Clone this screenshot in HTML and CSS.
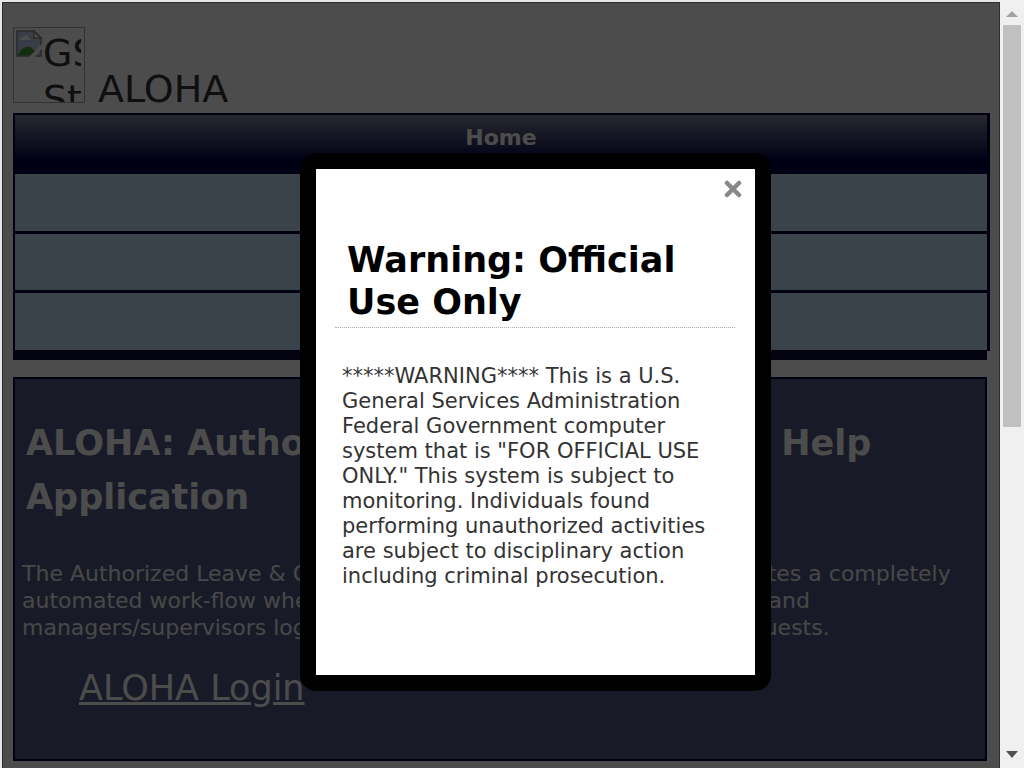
FILE: index.html
```
<!DOCTYPE html>
<html lang="en">
<head>
<meta charset="utf-8">
<title>ALOHA</title>
<link rel="stylesheet" href="styles.css">
</head>
<body>
<div class="window">
  <div class="viewport">
    <div class="page">
      <header class="header">
        <div class="logo" role="img" aria-label="GSA Star Mark">
          <svg class="logo-icon" viewBox="0 0 27 27" width="27" height="27" aria-hidden="true">
            <path d="M1 1h17l7 7v18H1z" fill="#bccdf0"/>
            <path d="M4 10c0-3 3-3 4-4 2-2 5 0 5 2 2 0 2 2 2 2z" fill="#fff"/>
            <path d="M1 26c4-7 8-10 12-9 3 0 5 3 7 6l-3 3z" fill="#3f9a2e"/>
            <path d="M15 26H1V1h17l7 7v18z" fill="none" stroke="#888" stroke-width="1.5"/>
            <path d="M18 1v7h7z" fill="#fff" stroke="#888" stroke-width="1.5"/>
            <path d="M13 27L27 13v4l-8 10z" fill="#fff"/>
          </svg>
          <span class="logo-alt">GSA Star Mark</span>
        </div>
        <span class="site-name">ALOHA</span>
      </header>
      <nav class="menu" aria-label="Main">
        <ul class="menu-list">
          <li><a class="menu-home" href="#">Home</a></li>
          <li class="menu-row"></li>
          <li class="menu-row"></li>
          <li class="menu-row"></li>
        </ul>
      </nav>
      <main class="panel">
        <h1 class="panel-title">ALOHA: Authorized Leave &amp; Overtime Help Application</h1>
        <p class="panel-text">The Authorized Leave &amp; Overtime Help Application (ALOHA) integrates a completely automated work-flow where employees create their leave requests and managers/supervisors log in to approve or reject the submitted requests.</p>
        <a class="login" href="#">ALOHA Login</a>
      </main>
    </div>
    <div class="overlay"></div>
    <section class="dialog" role="dialog" aria-labelledby="warning-title">
      <button class="close" type="button" aria-label="Close">
        <svg viewBox="0 0 18 18" width="18" height="18" aria-hidden="true"><path d="M3 3l12 12M15 3L3 15" stroke="#888" stroke-width="4.5" stroke-linecap="round"/></svg>
      </button>
      <h2 class="dialog-title" id="warning-title">Warning: Official Use Only</h2>
      <p class="dialog-text">*****WARNING**** This is a U.S. General Services Administration Federal Government computer system that is "FOR OFFICIAL USE ONLY." This system is subject to monitoring. Individuals found performing unauthorized activities are subject to disciplinary action including criminal prosecution.</p>
    </section>
  </div>
  <div class="scrollbar" aria-hidden="true">
    <svg viewBox="0 0 24 25" width="24" height="25"><path d="M6 17l6-6 6 6z" fill="#a3a3a3"/></svg>
    <div class="track"><div class="thumb"></div></div>
    <svg viewBox="0 0 24 25" width="24" height="25"><path d="M6 8h12l-6 7z" fill="#505050"/></svg>
  </div>
</div>
</body>
</html>
```
FILE: styles.css
```
* { box-sizing: border-box; }
body {
  margin: 0;
  background: #f0f0f0;
  color: #333;
  font-family: "DejaVu Sans", Verdana, sans-serif;
}
.window { display: flex; height: 100vh; overflow: hidden; }
.viewport {
  position: relative;
  flex: 1;
  overflow: hidden;
  background: #fff;
  border: solid #e3e8e6;
  border-width: 2px 0 0 2px;
}
.page { padding: 24px 13px 0 11px; }
.header { display: flex; align-items: flex-end; gap: 13px; height: 77px; color: #333; }
.logo {
  display: flex;
  width: 72px;
  height: 76px;
  padding: 2px 2px 0;
  border: 1px solid #aaa;
  overflow: hidden;
}
.logo-icon { flex: none; }
.logo-alt { width: 38px; overflow: hidden; font-size: 38px; line-height: 46px; }
.site-name { font-size: 38px; line-height: 28px; }
.menu { margin: 10px 0 0; border-bottom: 9px solid #101037; }
.menu-list {
  margin: 0 -3px 0 0;
  padding: 0;
  list-style: none;
  border: solid #000039;
  border-width: 2px 3px 1px 2px;
}
.menu-home {
  display: block;
  height: 59px;
  line-height: 45px;
  background: linear-gradient(#82859f, #000046 80%);
  color: #fff;
  font-size: 22px;
  font-weight: bold;
  text-align: center;
  text-decoration: none;
}
.menu-row { height: 60px; background: #bedff3; border-bottom: 3px solid #000039; }
.menu-row:nth-child(n + 3) { height: 59px; }
.menu-row:last-child { height: 57px; border-bottom: 0; }
.panel {
  margin-top: 17px;
  padding: 37px 7px 50px;
  background: #535782;
  border: 2px solid #000039;
  color: #f0f0f0;
}
.panel-title { margin: 0 4px; color: #fff; font-size: 35px; line-height: 54px; }
.panel-text { margin: 36px 0 26px; font-size: 22px; line-height: 27px; }
.login { display: inline-block; margin-left: 57px; color: #fff; font-size: 35px; line-height: 42px; }
.overlay { position: absolute; inset: 0; background: rgba(0, 0, 0, 0.7); border: solid rgba(0, 0, 0, 0.4); border-width: 1px 1px 0; }
.dialog {
  position: absolute;
  top: 151px;
  left: 298px;
  width: 471px;
  padding: 70px 20px 86px 19px;
  background: #fff;
  border: 16px solid #000;
  border-radius: 16px;
}
.close { position: absolute; top: 11px; right: 13px; display: flex; padding: 0; background: none; border: 0; }
.dialog-title {
  margin: 0;
  padding: 0 12px 4px;
  border-bottom: 1px dotted #aaa;
  color: #000;
  font-size: 35px;
  line-height: 42px;
}
.dialog-text { margin: 36px 24px 0 7px; font-size: 21px; line-height: 25px; }
.scrollbar { display: flex; flex-direction: column; width: 24px; background: #f0f0f0; }
.track { flex: 1; padding: 0 3px; }
.thumb { height: 56%; background: #c0c0c0; }
```
